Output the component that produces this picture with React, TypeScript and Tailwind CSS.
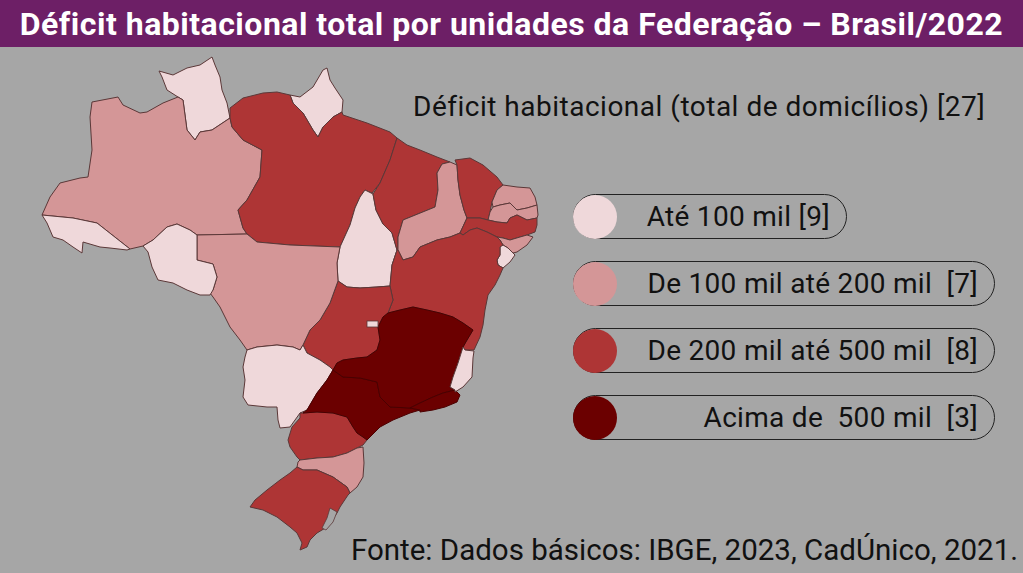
import React from "react";

const LIGHT = "#efd8da";
const PINK = "#d49697";
const RED = "#ae3535";
const DARK = "#6b0000";

const states: { id: string; fill: string; pts: string }[] = [
  { id: "RR", fill: LIGHT, pts: "159,71 173,75 187,68 200,65 212,57 215,65 220,77 222,90 227,103 230,118 212,130 200,132 195,140 187,130 183,100 178,97 167,90 162,77" },
  { id: "AP", fill: LIGHT, pts: "290,95 300,97 313,87 323,70 327,68 330,80 335,88 343,100 342,112 333,117 323,127 318,137 313,130 303,113 293,103" },
  { id: "AM", fill: PINK, pts: "92,102 118,97 123,105 140,113 147,112 163,103 178,97 183,100 187,130 195,140 200,132 212,130 230,118 232,127 243,140 262,150 260,177 247,200 238,210 243,228 247,234 197,235 190,230 177,224 167,227 153,240 143,246 130,249 97,223 73,218 42,215 50,197 60,183 80,178 88,177 92,150 90,117" },
  { id: "PA", fill: RED, pts: "230,108 243,98 263,93 277,92 290,95 293,103 303,113 313,130 318,137 323,127 333,117 342,112 343,115 367,123 390,132 397,138 390,160 380,183 372,193 365,190 360,197 355,208 350,225 340,247 290,245 257,242 247,234 243,228 238,210 247,200 260,177 262,150 243,140 232,127 230,118" },
  { id: "TO", fill: LIGHT, pts: "365,190 373,194 376,210 383,224 392,233 397,250 392,265 390,286 377,287 360,288 347,287 338,281 337,263 340,247 350,225 355,208 360,197" },
  { id: "MA", fill: RED, pts: "397,138 407,145 420,150 437,157 450,162 442,164 437,173 438,190 435,207 403,220 398,237 398,250 397,250 392,233 383,224 376,210 373,194 380,183 390,160" },
  { id: "PI", fill: PINK, pts: "450,162 457,165 458,180 460,195 464,210 467,218 460,233 450,237 437,240 420,247 413,257 403,260 398,250 398,237 403,220 435,207 438,190 437,173 442,164" },
  { id: "CE", fill: RED, pts: "455,160 470,158 483,165 497,177 503,185 497,190 492,202 490,212 488,220 480,218 467,218 464,210 460,195 458,180 457,165" },
  { id: "RN", fill: PINK, pts: "503,185 517,187 530,188 535,197 537,205 527,208 517,210 510,203 500,205 493,207 492,202 497,190" },
  { id: "PB", fill: PINK, pts: "493,207 500,205 510,203 517,210 527,208 537,205 538,215 537,218 527,220 517,215 510,218 507,223 497,222 488,220 490,212" },
  { id: "PE", fill: RED, pts: "467,218 480,218 488,220 497,222 507,223 510,218 517,215 527,220 537,218 537,225 535,232 527,235 520,237 510,240 503,238 497,237 487,232 477,228 470,230 463,235 460,233" },
  { id: "AL", fill: PINK, pts: "497,237 503,238 510,240 520,237 527,235 533,237 527,245 517,252 513,253 508,248 503,245 500,240" },
  { id: "SE", fill: LIGHT, pts: "500,245 503,245 508,248 513,253 515,255 510,262 503,268 498,265 497,260 500,255" },
  { id: "BA", fill: RED, pts: "397,250 398,250 403,260 413,257 420,247 437,240 450,237 460,233 463,235 470,230 477,228 487,232 497,237 500,240 503,245 500,247 500,255 497,260 498,265 503,268 500,275 495,285 488,295 485,310 483,325 480,337 474,350 465,350 463,347 467,340 473,330 463,323 453,317 440,313 427,310 413,307 400,310 388,313 393,300 390,286 392,265" },
  { id: "GO", fill: RED, pts: "338,281 347,287 360,288 377,287 390,286 393,300 388,313 383,317 378,327 380,340 377,350 367,357 357,358 343,360 337,363 333,370 330,367 320,360 307,353 303,345 310,330 320,320 330,303" },
  { id: "MT", fill: PINK, pts: "197,235 247,234 257,242 290,245 340,247 337,263 338,281 330,303 320,320 310,330 303,345 300,350 293,347 277,345 257,347 247,350 240,340 230,327 220,307 213,297 210,293 213,290 217,277 213,264 197,260" },
  { id: "RO", fill: LIGHT, pts: "143,246 153,240 167,227 177,224 190,230 197,235 197,260 213,264 217,277 213,290 210,295 200,295 187,290 173,283 158,280 152,267 148,252" },
  { id: "AC", fill: LIGHT, pts: "42,215 73,218 97,223 130,249 127,250 110,248 100,247 83,242 82,253 73,247 63,240 53,237 47,223" },
  { id: "MS", fill: LIGHT, pts: "247,350 257,347 277,345 293,347 300,350 303,345 307,353 320,360 330,367 333,370 327,380 317,393 307,410 300,413 290,427 280,428 278,420 277,407 267,407 248,405 243,397 245,380 243,367 245,357" },
  { id: "PR", fill: RED, pts: "300,413 303,413 317,412 333,413 347,417 353,427 357,433 363,437 367,440 363,445 357,448 347,453 333,457 317,458 300,460 297,457 290,447 288,440 292,427 300,418" },
  { id: "SC", fill: PINK, pts: "300,460 317,458 333,457 347,453 357,448 363,447 364,463 363,477 357,487 350,493 347,487 333,477 317,470 303,470 297,467 298,462" },
  { id: "RS", fill: RED, pts: "303,470 317,470 333,477 347,487 350,493 348,495 340,507 337,513 327,527 317,533 310,540 307,547 300,550 302,543 297,533 290,527 277,517 263,510 250,507 255,500 267,490 280,480 290,473 297,467" },
  { id: "SP", fill: DARK, pts: "333,370 343,377 360,378 377,382 380,397 390,407 410,408 420,410 410,413 393,420 380,427 367,440 363,437 357,433 353,427 347,417 333,413 317,412 303,413 307,410 317,393 327,380" },
  { id: "MG", fill: DARK, pts: "388,313 400,310 413,307 427,310 440,313 453,317 463,323 473,330 467,340 463,347 458,363 453,377 450,387 455,390 443,393 433,397 420,403 410,408 390,407 380,397 377,382 360,378 343,377 333,370 337,363 343,360 357,358 367,357 377,350 380,340 378,327 383,317" },
  { id: "RJ", fill: DARK, pts: "410,408 420,403 433,397 443,393 455,390 460,395 457,402 445,407 433,410 420,412 420,410" },
  { id: "ES", fill: LIGHT, pts: "465,350 474,351 473,358 472,377 463,387 455,392 455,390 450,387 453,377 458,363 463,347" },
];

function BrazilMap() {
  return (
    <svg
      viewBox="0 47 573 526"
      className="col-start-1 col-span-3 row-start-1 row-span-3 w-[573px] h-[526px]"
    >
      {states.map((s) => (
        <polygon
          key={s.id}
          points={s.pts}
          fill={s.fill}
          stroke={s.fill === DARK ? "#4a0000" : "#5b3838"}
          strokeWidth={1}
          strokeLinejoin="round"
        />
      ))}
      <rect x={367} y={321} width={11} height={6} fill={LIGHT} stroke="#5b3838" strokeWidth={0.8} />
      <polygon points="330,508 337,512 333,522 326,530 322,528 327,518" fill="#a6a6a6" stroke="#5b3838" strokeWidth={0.8} />
    </svg>
  );
}

const legend = [
  { color: LIGHT, label: "Até 100 mil [9]", w: "w-[274px]" },
  { color: PINK, label: "De 100 mil até 200 mil\u00a0\u00a0[7]", w: "w-[422px]" },
  { color: RED, label: "De 200 mil até 500 mil\u00a0\u00a0[8]", w: "w-[422px]" },
  { color: DARK, label: "Acima de\u00a0\u00a0500 mil\u00a0\u00a0[3]", w: "w-[422px]" },
];

export default function App() {
  return (
    <div
      className="w-[1023px] h-[573px] bg-[#a6a6a6] flex flex-col overflow-hidden text-[#111]"
      style={{ fontFamily: "Roboto, 'Liberation Sans', sans-serif" }}
    >
      <header className="h-[47px] bg-[#6d1f66] flex items-center justify-center shrink-0">
        <h1 className="text-white font-bold text-[32px] tracking-[0.5px] leading-none whitespace-nowrap">
          Déficit habitacional total por unidades da Federação – Brasil/2022
        </h1>
      </header>
      <div className="flex-1 grid grid-cols-[350px_63px_160px_1fr] grid-rows-[auto_auto_1fr]">
        <BrazilMap />
        <p className="col-start-3 col-span-2 row-start-1 mt-[43px] text-[28px] tracking-[0.5px] leading-[34px] whitespace-nowrap">
          Déficit habitacional (total de domicílios) [27]
        </p>
        <div className="col-start-4 row-start-2 mt-[70px] flex flex-col gap-[22px]">
          {legend.map((l) => (
            <div
              key={l.label}
              className={`${l.w} h-[45px] rounded-full border-[1.5px] border-[#222] flex items-center`}
            >
              <span
                className="w-[44px] h-[44px] rounded-full shrink-0 -ml-[1px]"
                style={{ backgroundColor: l.color }}
              />
              <span className="flex-1 text-right pr-[16px] text-[28px] tracking-[0.3px] leading-none whitespace-nowrap">
                {l.label}
              </span>
            </div>
          ))}
        </div>
        <p className="col-start-2 col-span-3 row-start-3 self-end text-right pr-[5px] pb-[6px] text-[29.5px] leading-[34px] whitespace-nowrap">
          Fonte: Dados básicos: IBGE, 2023, CadÚnico, 2021.
        </p>
      </div>
    </div>
  );
}
